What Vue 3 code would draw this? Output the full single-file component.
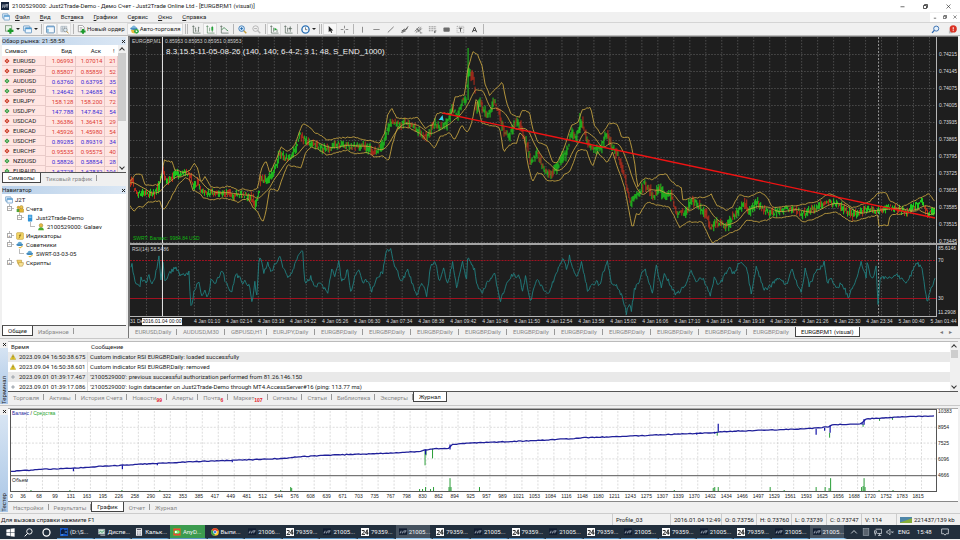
<script setup>
import { h } from 'vue'

const s = (stroke, width = 1, fill = 'none') => ({ stroke, 'stroke-width': width, fill })

// Small icon set, every glyph drawn on a 10 x 10 grid.
const glyphs = {
  app: [['rect', { width: 10, height: 10, fill: '#14233a' }], ['path', { d: 'M2.5 3v3.5h-1M5 3v3.5H4M6 3.5h3M7.5 3.5v3.5', ...s('#e8eef5', 1) }]],
  windows: [['rect', { x: 0.5, y: 1, width: 7, height: 5.5, rx: 0.6, fill: '#d9ecfb', stroke: '#5b8fbd', 'stroke-width': 0.8 }], ['rect', { x: 2.5, y: 3, width: 7, height: 5.8, rx: 0.6, fill: '#eef7ff', stroke: '#4a84b8', 'stroke-width': 0.8 }], ['path', { d: 'M2.6 4h6.8', ...s('#4a9ad4', 1.4) }]],
  addChart: [['rect', { x: 0.5, y: 0.8, width: 7, height: 6, fill: '#eaf3ea', stroke: '#6a8a6a', 'stroke-width': 0.8 }], ['path', { d: 'M6 3.6v6M3 6.6h6.4', ...s('#1d9a2b', 2.4) }]],
  marketWatch: [['rect', { x: 0.7, y: 1.2, width: 8.6, height: 7.6, rx: 0.8, fill: '#f4f9fd', stroke: '#4779a8', 'stroke-width': 0.9 }], ['path', { d: 'M1 2h8', ...s('#5c97cc', 1) }], ['path', { d: 'M2.2 4.4v3.4', ...s('#39c', 1) }]],
  dataWindow: [['path', { d: 'M1 1.5h6.5v6H1zM1 3.5h6.5M1 5.5h6M3 1.5v6M5 1.5v6', ...s('#8d9fae', 0.6) }], ['circle', { cx: 6, cy: 5.5, r: 2, fill: '#dcedf6', stroke: '#777', 'stroke-width': 0.6 }], ['path', { d: 'M7.4 7l2 2.3', ...s('#b58b34', 1.1) }]],
  newOrder: [['path', { d: 'M1.5 .5h4.5l2 2v5h-6.5z', fill: '#fff', stroke: '#777', 'stroke-width': 0.7 }], ['path', { d: 'M3 3h3M3 4.5h3', ...s('#777', 0.6) }], ['path', { d: 'M6.7 4.5v5.2M4 7.1h5.5', ...s('#1d9a2b', 2.2) }]],
  expert: [['path', { d: 'M1.5 6.5c2 2 5 1.2 6-1l1 1.5-3.5 2.5z', fill: '#e7b734' }], ['ellipse', { cx: 4.6, cy: 4.6, rx: 4.2, ry: 1.6, fill: '#3f86b8' }], ['path', { d: 'M2 4c0-4 5.5-4 5.5 0z', fill: '#63a8d2' }]],
  autoTrade: [['path', { d: 'M1 5.5l4-1 3 2-3 3-3-1z', fill: '#e8bd3c' }], ['ellipse', { cx: 4.3, cy: 4, rx: 4, ry: 1.5, fill: '#3f86b8' }], ['path', { d: 'M1.8 3.5c0-4 5-4 5 0z', fill: '#7bb5da' }], ['circle', { cx: 7.2, cy: 7, r: 2.6, fill: '#27a43a' }], ['path', { d: 'M6.4 5.6l2.2 1.4-2.2 1.4z', fill: '#fff' }]],
  bars: [['path', { d: 'M1.5 1v8h8M.5 2.2l1-1.4 1 1.4M4 3v4.5M3 3.5h1M4 6.5h1M7.2 2v5.5M6.2 6.8h1M7.2 3h1', ...s('#5b6b60', 0.8) }]],
  candles: [['path', { d: 'M1.5 1v8h8M.5 2.2l1-1.4 1 1.4M4 3v4M7 1v7', ...s('#4c7c55', 0.7) }], ['path', { d: 'M7 2.2v4', ...s('#25a53a', 2) }]],
  line: [['path', { d: 'M1.5 1v8h8M.5 2.2l1-1.4 1 1.4', ...s('#5b6b60', 0.8) }], ['path', { d: 'M2 5.5C4 2 5.5 3 6.5 4.8L9 6.6', ...s('#39874a', 0.9) }]],
  zoomIn: [['path', { d: 'M6.2 6.2l3 3', ...s('#c4a044', 1.6) }], ['circle', { cx: 4, cy: 4, r: 3.1, fill: '#d9ecfa', stroke: '#3a78b5', 'stroke-width': 1 }], ['path', { d: 'M4 2.4v3.2M2.4 4h3.2', ...s('#2068ac', 1) }]],
  zoomOut: [['path', { d: 'M6.2 6.2l3 3', ...s('#bbb', 1.5) }], ['circle', { cx: 4, cy: 4, r: 3.1, fill: '#f1f1f1', stroke: '#aaa', 'stroke-width': 0.9 }], ['path', { d: 'M2.4 4h3.2', ...s('#aaa', 1) }]],
  scroll: [['path', { d: 'M1.5 1v8h8M.5 2.2l1-1.4 1 1.4M4 3v4.5M7.8 5v3', ...s('#5b6b60', 0.8) }], ['path', { d: 'M5 3l3 1.8L5 6.5z', fill: '#2aa33b' }]],
  shift: [['path', { d: 'M1.5 1v8h8M.5 2.2l1-1.4 1 1.4M4 3v4.5M7 1.5v6M5 4h4', ...s('#5b6b60', 0.8) }], ['path', { d: 'M5 4l2-1.4v2.8z', fill: '#5b6b60' }]],
  clock: [['circle', { cx: 5, cy: 5, r: 4, fill: '#f4faff', stroke: '#2b70b4', 'stroke-width': 1.5 }], ['path', { d: 'M5 2.6v2.6h2', ...s('#555', 0.8) }]],
  cursor: [['path', { d: 'M3 1v7l1.6-1.5L5.8 9l1.1-.6-1.1-2.3H8z', fill: '#222' }]],
  cross: [['path', { d: 'M5 .8v3M5 6.2v3M.8 5h3M6.2 5h3', ...s('#777', 0.9) }]],
  vline: [['path', { d: 'M5 2v6.5', ...s('#777', 0.9) }]],
  hline: [['path', { d: 'M1.5 5h7', ...s('#777', 0.9) }]],
  trend: [['path', { d: 'M2 8.3L8.5 2', ...s('#666', 0.9) }]],
  channel: [['path', { d: 'M1.5 8.5l3-4 2 .5 2.5-3.5M2.5 8.8l6-5.5M2 6l4 1', ...s('#555', 1) }]],
  pitch: [['path', { d: 'M1 7l5-5M2 8.5L8 2.6M3 4l3 3M4.5 8l4-4', ...s('#555', 0.9) }], ['path', { d: 'M7 8.8h2.2M7 7.2v2.2', ...s('#777', 0.8) }]],
  fibo: [['path', { d: 'M1 2h8M1 4.2h8M1 6.4h5', 'stroke-dasharray': '1.2 .6', ...s('#666', 0.8) }], ['path', { d: 'M7.3 9V6.5h2M7.3 7.8h1.6', ...s('#555', 0.8) }]],
  rect: [['rect', { x: 1.6, y: 2.8, width: 7, height: 4.6, rx: 1, fill: '#6b6b6b' }]],
  textBox: [['rect', { x: 1.2, y: 1.5, width: 7.4, height: 7, 'stroke-dasharray': '1 1', ...s('#888', 0.7) }], ['path', { d: 'M3 3.5h4M5 3.5v4', ...s('#444', 1) }]],
  label: [['path', { d: 'M2.6 8L5 2.4 7.4 8M3.4 6.2h3.2', ...s('#444', 1.1) }]],
  search: [['circle', { cx: 5.8, cy: 4, r: 2.8, fill: '#e6f1fb', stroke: '#2c66ab', 'stroke-width': 1 }], ['path', { d: 'M3.7 6L1.2 8.8', ...s('#2c66ab', 1.5) }]],
  alert: [['path', { d: 'M1 9.5V6h4v3.2z', fill: '#bbb' }], ['circle', { cx: 5.8, cy: 4.4, r: 4, fill: '#da3325' }], ['path', { d: 'M5.8 2.4v2.6M5.8 5.8v1', ...s('#fff', 1.1) }]],
  up: [['path', { d: 'M5 .8L9.2 5 5 9.2.8 5z', fill: '#2b9638' }], ['path', { d: 'M5 3.4L6.6 5 5 6.6 3.4 5z', fill: '#bfe8c4' }]],
  down: [['path', { d: 'M5 .8L9.2 5 5 9.2.8 5z', fill: '#c5341f' }], ['path', { d: 'M5 3.4L6.6 5 5 6.6 3.4 5z', fill: '#ffc9bd' }]],
  accounts: [['path', { d: 'M.8 8.8V5h4.5v3.8z', fill: '#4ea53a' }], ['circle', { cx: 3, cy: 3, r: 2, fill: '#d4a73a' }], ['path', { d: 'M4 9V5.2c1-1.5 4.5-1.5 5.4 0V9z', fill: '#e3b62e', stroke: '#94721a', 'stroke-width': 0.5 }], ['circle', { cx: 6.7, cy: 2.7, r: 2.1, fill: '#e9c250', stroke: '#94721a', 'stroke-width': 0.5 }]],
  server: [['rect', { x: 2.4, y: 0.8, width: 5.4, height: 8.6, rx: 0.6, fill: '#2e93d8' }], ['path', { d: 'M3.4 2.6h3.4M3.4 4.3h3.4', ...s('#bfe3f9', 0.8) }]],
  user: [['circle', { cx: 5, cy: 3, r: 2.3, fill: '#e3bb45', stroke: '#8c7223', 'stroke-width': 0.5 }], ['path', { d: 'M1.4 9.2c0-5 7.2-5 7.2 0z', fill: '#4aaa2e' }]],
  indicator: [['rect', { x: 0.8, y: 0.8, width: 8.4, height: 8.4, rx: 1, fill: '#f5d868', stroke: '#b99122', 'stroke-width': 0.7 }], ['path', { d: 'M6.6 2.6C5 2 5 4 4.8 5s-.2 3-1.6 2.6M3.6 4.6h2.8', ...s('#7a5a10', 0.8) }]],
  scripts: [['path', { d: 'M1 1.5h6v5H2.5z', fill: '#f1cf5f', stroke: '#a98322', 'stroke-width': 0.6 }], ['path', { d: 'M3 4.5h6.2v2L8 9H4z', fill: '#f6e29a', stroke: '#a98322', 'stroke-width': 0.6 }]],
  warn: [['path', { d: 'M5 .8L9.6 9H.4z', fill: '#f3d526', stroke: '#8f7a10', 'stroke-width': 0.6 }], ['path', { d: 'M5 3.2v3M5 7v1', ...s('#333', 1) }]],
  dot: [['circle', { cx: 5, cy: 5, r: 2.1, fill: '#c9ced4', stroke: '#7e868e', 'stroke-width': 0.9 }]],
  close: [['path', { d: 'M2 2l6 6M8 2L2 8', ...s('#111', 1.8) }]],
  closeThin: [['path', { d: 'M1 1l8 8M9 1L1 9', ...s('#222', 1.2) }]],
  minimize: [['path', { d: 'M1 5.5h8', ...s('#222', 1.3) }]],
  restore: [['path', { d: 'M1 3h6v6H1zM3 3V1h6v6H7', ...s('#222', 1.5) }]],
  low: [['path', { d: 'M2 8h6', ...s('#444', 1.8) }]],
  winLogo: [['path', { d: 'M.4 1.6l4-.6v3.7h-4zM5 .9L9.6.2v4.5H5zM.4 5.3h4V9l-4-.6zM5 5.3h4.6v4.5L5 9.1z', fill: '#fff' }]],
  searchLight: [['circle', { cx: 6, cy: 3.8, r: 3, ...s('#fff', 1) }], ['path', { d: 'M4 6L.8 9.3', ...s('#fff', 1.1) }]],
  cortana: [['circle', { cx: 5, cy: 5, r: 3.9, ...s('#fff', 1.4) }]],
  disk: [['rect', { width: 10, height: 10, fill: '#1557c8' }], ['path', { d: 'M1 3l3-2 2 2 3-1v6l-4-1-4 2z', fill: '#0b1d3f' }], ['path', { d: 'M1 8.5h3M6 5h3', ...s('#7fc4ff', 1) }]],
  taskman: [['rect', { x: 0.5, y: 1.5, width: 8, height: 6, fill: '#cfe8d8', stroke: '#aab', 'stroke-width': 0.8 }], ['path', { d: 'M1 6l2-2 2 1.5L8 3', ...s('#2b8b55', 1) }], ['path', { d: 'M3 9h6', ...s('#ddd', 1) }]],
  calc: [['rect', { x: 1.2, y: 0.3, width: 7.6, height: 9.4, fill: '#eef0f2' }], ['path', { d: 'M2.4 2h5.2', ...s('#445', 1.2) }], ['path', { d: 'M2.6 4.8h5M2.6 6.5h5M2.6 8.2h5', 'stroke-dasharray': '1 1', ...s('#667', 1) }]],
  anydesk: [['rect', { width: 10, height: 10, rx: 0.8, fill: '#ef443b' }], ['path', { d: 'M3.6 2.6L6 5 3.6 7.4 1.2 5zM5.4 2.8L7.8 5 5.4 7.2M6.4 2.6L8.8 5 6.4 7.4', fill: '#fff' }]],
  chrome: [['circle', { cx: 5, cy: 5, r: 4.8, fill: '#fbc02d' }], ['path', { d: 'M5 5L.9 2.5A4.8 4.8 0 0 1 9.3 3z', fill: '#e33b2e' }], ['path', { d: 'M5 5L.9 2.5A4.8 4.8 0 0 0 4.5 9.8z', fill: '#2e9f4a' }], ['circle', { cx: 5, cy: 5, r: 2.3, fill: '#fff' }], ['circle', { cx: 5, cy: 5, r: 1.7, fill: '#3f7fe8' }]],
  mt: [['rect', { y: 0.5, width: 10, height: 8, fill: '#101c30' }], ['path', { d: 'M2.6 3.4L2 6.2H.8M5.4 3.4L4.8 6.2H3.6M6.4 3.6h3M7.8 3.6l-.6 3', ...s('#c6d0dc', 0.9) }]],
  n24: [['rect', { width: 10, height: 10, fill: '#fff' }], ['path', { d: 'M1 3.2h3v2L1.2 8H5M7.8 8.4V2.2L5.6 6.4H9.4', ...s('#111', 1.1) }]],
  chevron: [['path', { d: 'M1.5 6.8L5 3.2l3.5 3.6', ...s('#e8ecf0', 1) }]],
  device: [['rect', { x: 1.5, y: 0.8, width: 7, height: 8.4, fill: '#59636e', stroke: '#98a2ab', 'stroke-width': 0.8 }]],
  network: [['path', { d: 'M2 1.5h7.5v5.3H4M5 9.3h4M6.8 7v2M.5 3.5v3h2.4v-3zM1.6 6.5v3', ...s('#e8ecf0', 0.9) }]],
  mute: [['path', { d: 'M1 3.8h1.6L5 1.5v7L2.6 6.2H1z', ...s('#e8ecf0', 0.8) }], ['path', { d: 'M6.8 4l2.4 2.4M9.2 4L6.8 6.4', ...s('#e8ecf0', 0.8) }]],
  notify: [['path', { d: 'M.8 1.2h8.4v6H6.4L5 9 3.6 7.2H.8z', ...s('#e8ecf0', 0.9) }]],
  traffic: [['rect', { width: 10, height: 10, fill: '#4f86a8' }], ['path', { d: 'M0 9L10 2v8H0z', fill: '#86ad3a' }]],
}
const Glyph = (props) => h('svg', { viewBox: '0 0 10 10', class: 'glyph', 'aria-hidden': 'true', preserveAspectRatio: props.fill ? 'none' : 'xMidYMid' },
  glyphs[props.name].map(([tag, attrs]) => h(tag, attrs)))
Glyph.props = ['name', 'fill']

const menu = [['Ф', 'айл', ''], ['В', 'ид', ''], ['а', 'вка', 'Вст'], ['Г', 'рафики', ''], ['е', 'рвис', 'С'], ['О', 'кно', ''], ['С', 'правка', '']]

const symbols = [
  ['EURUSD', '1.06993', '1.07014', 21, 0], ['EURGBP', '0.85807', '0.85859', 52, 0], ['AUDUSD', '0.63760', '0.63795', 35, 1],
  ['GBPUSD', '1.24642', '1.24685', 43, 1], ['EURJPY', '158.128', '158.200', 72, 0], ['USDJPY', '147.788', '147.842', 54, 1],
  ['USDCAD', '1.36386', '1.36415', 29, 0], ['EURCAD', '1.45926', '1.45980', 54, 0], ['USDCHF', '0.89285', '0.89319', 34, 1],
  ['EURCHF', '0.95535', '0.95575', 40, 0], ['NZDUSD', '0.58826', '0.58854', 28, 1], ['EURAUD', '1.67728', '1.67832', 104, 1],
]

const tree = [
  [0, 'windows', 'J2T', ''], [1, 'accounts', 'Счета', '−'], [2, 'server', 'Just2Trade-Demo', '−'], [3, 'user', '2100529000: Galaev', ''],
  [1, 'indicator', 'Индикаторы', '+'], [1, 'expert', 'Советники', '−'], [2, 'expert', 'SWRT-03-03-05', ''], [1, 'scripts', 'Скрипты', '+'],
]

const prices = ['0.74215', '0.74145', '0.74075', '0.74005', '0.73935', '0.73865', '0.73795', '0.73725', '0.73655', '0.73585', '0.73515', '0.73445']
const times = ['31 De', '', '4 Jan 01:10', '4 Jan 02:14', '4 Jan 03:18', '4 Jan 04:22', '4 Jan 05:26', '4 Jan 06:30', '4 Jan 07:34', '4 Jan 08:38', '4 Jan 09:42', '4 Jan 10:46', '4 Jan 11:50', '4 Jan 12:54', '4 Jan 13:58', '4 Jan 15:02', '4 Jan 16:06', '4 Jan 17:10', '4 Jan 18:14', '4 Jan 19:18', '4 Jan 20:22', '4 Jan 21:26', '4 Jan 22:30', '4 Jan 23:34', '5 Jan 00:40', '5 Jan 01:44']
const chartTabs = ['EURUSD,Daily', 'AUDUSD,M30', 'GBPUSD,H1', 'EURJPY,Daily', ...Array(10).fill('EURGBP,Daily')]

const parse = (text) => text.trim().split(/\s+/).map((p) => p.split(',').map(Number))
const price = parse(`130,183 132,179 134,186 136,192 140,193 145,191 148,195 155,193 159,185 161,180 163,167 166,182 170,180 175,175 180,173 188,173 191,178 194,188 198,183 201,191 206,193 213,193 225,192 233,196 241,194 251,197 256,207 260,187 261,178 268,182 275,170 280,153 285,158 291,158 296,148 300,135 305,140 311,143 318,146 325,149 330,148 340,144 353,147 363,145 375,153 383,145 388,130 392,122 400,125 408,122 417,130 427,138 435,124 442,127 448,122 453,107 458,117 463,100 467,103 468,72 470,74 475,80 477,112 480,101 485,111 488,118 495,99 500,115 505,132 510,136 517,121 522,127 527,143 532,163 538,153 545,170 552,175 560,163 567,153 572,133 577,138 583,121 587,138 592,150 602,148 607,133 613,147 618,153 623,167 627,183 632,206 635,195 639,193 642,191 645,183 650,190 655,197 660,187 665,197 672,195 678,213 687,212 693,200 702,208 708,215 712,229 718,222 727,227 737,213 745,203 750,212 758,202 765,210 773,213 783,210 797,209 803,215 813,210 827,202 840,205 853,215 867,210 880,210 890,207 907,212 923,202 930,214 937,209`)
const upper = parse(`130,182 135,174 142,175 145,185 159,185 161,180 164,160 172,162 175,170 186,173 190,170 194,163 198,168 201,183 205,177 211,187 221,188 228,186 238,190 245,189 251,191 258,188 261,170 266,161 270,173 275,163 281,147 288,152 295,145 303,123 310,127 315,133 321,135 327,140 340,138 353,137 367,140 380,143 385,133 388,115 392,108 397,118 408,119 418,117 425,128 433,125 437,113 445,113 452,115 455,97 465,95 468,70 473,52 478,55 483,67 485,83 490,95 497,88 503,82 507,103 512,115 520,117 523,110 530,112 533,128 538,142 547,145 553,162 558,163 565,147 572,125 578,123 583,110 591,107 595,125 602,135 610,123 618,124 622,137 630,138 635,160 638,187 642,181 647,178 653,180 660,175 667,174 671,180 677,185 682,188 683,200 692,198 707,197 712,194 717,205 727,210 733,207 740,195 750,197 760,192 768,197 773,207 783,207 800,205 817,202 830,193 840,198 853,208 870,202 879,193 888,193 890,200 903,207 913,202 923,197 930,194 937,203`)
const lower = parse(`130,206 134,211 138,207 143,207 148,202 160,201 162,208 164,210 170,200 178,185 185,178 190,180 193,190 200,193 203,198 211,200 225,198 238,202 248,198 253,207 258,212 263,223 266,213 270,188 278,191 285,172 288,165 301,168 306,152 311,147 320,150 327,155 340,152 347,150 355,154 367,152 375,157 383,156 389,161 393,143 398,127 410,128 420,133 425,138 435,148 440,137 450,133 455,140 462,125 468,133 473,120 477,97 482,123 488,125 500,127 504,152 510,145 517,143 520,133 525,137 528,163 533,182 538,173 543,174 548,181 560,181 565,174 570,172 575,160 578,150 587,150 593,167 598,152 608,163 613,152 618,167 625,187 633,229 637,214 640,214 648,202 657,205 670,207 677,220 680,228 688,222 703,222 708,233 713,243 722,238 730,233 740,230 747,220 760,222 768,220 773,217 783,218 797,215 803,222 813,220 827,213 837,212 845,217 852,222 870,217 879,215 880,226 889,225 891,215 907,213 920,210 930,215 937,213`)
const rsi = parse(`131,267 132,264 135,283 140,288 141,279 146,283 149,275 152,285 155,277 159,257 161,280 163,263 165,280 170,273 176,267 180,274 185,275 189,273 191,307 194,293 199,280 202,297 205,292 208,297 211,280 216,283 222,270 226,283 232,292 236,273 243,283 246,282 250,288 252,302 255,283 257,297 259,262 261,258 264,273 268,264 272,272 280,255 283,268 289,278 295,265 300,252 303,253 305,283 311,277 315,287 320,282 328,293 332,268 335,278 339,262 342,283 348,270 351,293 355,277 360,270 363,283 366,278 372,290 378,277 383,272 387,250 391,249 395,265 402,282 408,270 417,295 422,283 427,295 431,267 436,262 440,282 444,268 448,285 453,262 457,287 463,263 467,280 468,257 475,270 478,287 483,292 487,283 495,273 501,302 507,282 513,275 520,277 523,290 526,277 531,302 537,280 543,288 550,293 555,277 564,258 567,270 570,257 577,277 582,263 588,290 597,282 600,285 608,260 612,283 618,287 623,297 627,313 630,303 632,310 635,290 640,280 645,268 648,277 653,293 657,267 662,287 665,273 670,283 675,293 680,293 687,283 692,270 697,282 703,278 711,295 715,278 720,285 730,267 735,275 740,263 747,265 752,293 757,267 765,290 773,285 778,277 787,285 793,270 802,293 806,270 810,285 817,272 825,263 828,283 832,277 837,288 843,283 849,297 855,285 862,263 867,277 868,263 873,280 877,267 879,303 881,278 890,277 897,275 908,283 917,263 923,267 928,303 932,288 937,277`)
const balance = parse(`11,472 30,471 43,470 73,469 100,467 122,466 157,464 200,462 233,461 287,459 293,458 320,456 353,455 380,454 420,452 428,450 437,449 450,449 452,445 478,443 537,441 587,438 640,436 715,433 720,432 807,429 830,427 832,425 862,424 867,419 900,417 937,416`)

const valueAt = (points, x) => {
  const i = Math.max(1, points.findIndex((p) => p[0] >= x))
  const [a, b] = [points[i - 1], points[i]]
  return a[1] + ((b[1] - a[1]) * (x - a[0])) / (b[0] - a[0] || 1)
}
const noise = (n) => { const v = Math.sin(n * 127.1 + 11.7) * 43758.5453; return (v - Math.floor(v)) * 2 - 1 }
const round = (v) => Math.round(v * 10) / 10
const toLine = (points) => points.map(([x, y]) => `${round(x)},${round(y)}`).join(' ')
const sample = (points, from, to, step, jitter) => {
  const out = []
  for (let x = from; x <= to; x += step) out.push([x, valueAt(points, x) + noise(x) * jitter])
  return out
}

const middle = sample(price, 130, 936, 2, 0).map(([x]) => {
  let sum = 0
  for (let k = 0; k < 12; k++) sum += valueAt(price, Math.max(130, x - k * 1.4))
  return [x, sum / 12]
})
const candlePath = (wanted) => {
  let d = ''
  for (let i = 0, x = 130.5; x < 936; x += 1, i++) {
    const slope = valueAt(price, Math.min(936, x + 2)) - valueAt(price, x)
    const rising = noise(i + 40) * 2.4 - slope * 0.3 > -0.7
    if (rising !== wanted) continue
    const mid = valueAt(price, x) + noise(i) * 2.4
    const size = 1 + Math.abs(noise(i + 900)) * (2.4 + Math.min(3, Math.abs(slope)))
    d += `M${round(x)} ${round(mid - size)}V${round(mid + size)}`
  }
  return d
}
const upCandles = candlePath(true)
const downCandles = candlePath(false)
const upperLine = toLine(sample(upper, 130, 936, 1.5, 0.6))
const lowerLine = toLine(sample(lower, 130, 936, 1.5, 0.6))
const middleLine = toLine(middle)
const rsiLine = toLine(sample(rsi, 131, 936, 1, 2.2))
const balanceLine = toLine(sample(balance, 11, 936, 2, 0.35))

const columns = Array.from({ length: 50 }, (_, i) => 146.5 + i * 16)
const rows = Array.from({ length: 12 }, (_, i) => Math.round(54 + i * 17.1) + 0.5)
const testerColumns = Array.from({ length: 57 }, (_, i) => 26.5 + i * 16)
const steps = [36, 68, 99, 131, 163, 195, 226, 258, 290, 322, 353, 385, 417, 449, 481, 512, 544, 576, 608, 639, 671, 703, 735, 767, 798, 830, 862, 894, 925, 957, 989, 1021, 1053, 1084, 1116, 1148, 1180, 1211, 1243, 1275, 1307, 1339, 1370, 1402, 1434, 1466, 1497, 1529, 1561, 1593, 1625, 1656, 1688, 1720, 1752, 1783, 1815]
const volumes = [[291, 4], [292, 3], [420, 2], [423, 2], [426, 4], [431, 2], [434, 4], [449.5, 4], [450.5, 13], [451.5, 4], [480, 4], [714, 3], [715.5, 4], [719, 4], [771, 4], [817, 4], [826, 4], [830, 3], [831.5, 13], [862.5, 4], [864, 5], [865, 13], [866, 4], [31, 1], [70, 1], [122, 1], [160, 1], [281, 1], [675, 1], [785, 1], [880, 1], [894, 1]]

const log = [
  ['warn', '2023.09.04 16:50:38.675', 'Custom indicator RSI EURGBP,Daily: loaded successfully'],
  ['warn', '2023.09.04 16:50:38.601', 'Custom indicator RSI EURGBP,Daily: removed'],
  ['dot', '2023.09.01 01:39:17.467', "'2100529000': previous successful authorization performed from 81.26.146.150"],
  ['dot', '2023.09.01 01:39:17.086', "'2100529000': login datacenter on Just2Trade-Demo through MT4.AccessServer#16 (ping: 113.77 ms)"],
]
const terminalTabs = [['Торговля'], ['Активы'], ['История Счета'], ['Новости', 99], ['Алерты'], ['Почта', 6], ['Маркет', 107], ['Сигналы'], ['Статьи'], ['Библиотека'], ['Эксперты'], ['Журнал']]
const testerTabs = ['Настройки', 'Результаты', 'График', 'Отчет', 'Журнал']

const tasks = [
  ['disk', '(D:\\S...'], ['taskman', 'Диспе...'], ['calc', 'Кальк...'], ['anydesk', 'AnyD...', 'green'], ['chrome', 'Выпи...'],
  ['mt', '21006...'], ['n24', '79359...'], ['mt', '21005...'], ['n24', '79359...'], ['mt', '21005...', 'lit'], ['n24', '79359...'],
  ['mt', '21005...'], ['n24', '79359...'], ['mt', '21005...'], ['n24', '79359...'], ['mt', '21005...'], ['n24', '79359...'],
  ['mt', '21005...'], ['n24', '79359...'], ['mt', '21005...'], ['mt', '21005...', 'lit'],
]
</script>

<template>
  <div class="desk">
    <header class="title">
      <Glyph name="app" />
      <span class="grow">2100529000: Just2Trade-Demo - Демо Счет - Just2Trade Online Ltd - [EURGBP,M1 (visual)]</span>
      <button aria-label="Свернуть"><Glyph name="minimize" /></button>
      <button aria-label="Восстановить"><Glyph name="restore" /></button>
      <button aria-label="Закрыть"><Glyph name="closeThin" /></button>
    </header>

    <nav class="menu">
      <Glyph name="windows" />
      <button v-for="m in menu" :key="m[0] + m[1]">{{ m[2] }}<u>{{ m[0] }}</u>{{ m[1] }}</button>
      <span class="grow"></span>
      <button class="mini" aria-label="Свернуть окно"><Glyph name="low" /></button>
      <button class="mini" aria-label="Восстановить окно"><Glyph name="restore" /></button>
      <button class="mini" aria-label="Закрыть окно"><Glyph name="closeThin" /></button>
    </nav>

    <div class="toolbar">
      <button class="drop" aria-label="Новый график"><Glyph name="addChart" /></button>
      <button class="drop" aria-label="Профили"><Glyph name="windows" /></button>
      <i class="sep"></i>
      <button class="on" aria-label="Обзор рынка"><Glyph name="marketWatch" /></button>
      <button class="on" aria-label="Окно данных"><Glyph name="dataWindow" /></button>
      <i class="sep"></i>
      <button class="wide"><Glyph name="newOrder" />Новый ордер</button>
      <button class="wide on"><Glyph name="autoTrade" />Авто-торговля</button>
      <i class="sep handle"></i>
      <button aria-label="Бары"><Glyph name="bars" /></button>
      <button class="on" aria-label="Свечи"><Glyph name="candles" /></button>
      <button aria-label="Линия"><Glyph name="line" /></button>
      <i class="sep"></i>
      <button aria-label="Увеличить"><Glyph name="zoomIn" /></button>
      <button aria-label="Уменьшить"><Glyph name="zoomOut" /></button>
      <i class="sep"></i>
      <button class="on" aria-label="Автопрокрутка"><Glyph name="scroll" /></button>
      <button aria-label="Сдвиг графика"><Glyph name="shift" /></button>
      <i class="sep"></i>
      <button class="drop" aria-label="Периоды"><Glyph name="clock" /></button>
      <i class="sep handle"></i>
      <button class="on" aria-label="Курсор"><Glyph name="cursor" /></button>
      <button aria-label="Перекрестие"><Glyph name="cross" /></button>
      <i class="sep"></i>
      <button v-for="t in ['vline', 'hline', 'trend', 'channel', 'pitch', 'fibo', 'rect', 'textBox', 'label']" :key="t" :aria-label="t"><Glyph :name="t" /></button>
      <i class="sep"></i>
      <span class="grow"></span>
      <button aria-label="Поиск"><Glyph name="search" /></button>
      <button class="notice" aria-label="Уведомления"><Glyph name="alert" /></button>
    </div>

    <main class="work">
      <aside class="side">
        <section>
          <h2 class="cap">Обзор рынка: 21:58:58<button aria-label="Закрыть обзор"><Glyph name="close" /></button></h2>
          <div class="market">
            <table>
              <thead><tr><th>Символ</th><th>Бид</th><th>Аск</th><th>!</th></tr></thead>
              <tbody>
                <tr v-for="r in symbols" :key="r[0]" :class="r[4] ? 'rise' : 'fall'">
                  <td><Glyph :name="r[4] ? 'up' : 'down'" />{{ r[0] }}</td><td>{{ r[1] }}</td><td>{{ r[2] }}</td><td>{{ r[3] }}</td>
                </tr>
              </tbody>
            </table>
            <div class="scroll market-scroll"><b></b></div>
          </div>
          <div class="tabs"><button class="active">Символы</button><button>Тиковый график</button></div>
        </section>
        <section class="nav">
          <h2 class="cap">Навигатор<button aria-label="Закрыть навигатор"><Glyph name="close" /></button></h2>
          <ul>
            <li v-for="n in tree" :key="n[2]" :class="'level' + n[0]">
              <i v-if="n[0]" class="twig"><b v-if="n[3]">{{ n[3] }}</b></i><Glyph :name="n[1]" />{{ n[2] }}
            </li>
          </ul>
          <div class="tabs"><button class="active">Общие</button><button>Избранное</button></div>
        </section>
      </aside>

      <section class="charts">
        <div class="dark">
          <div class="pane price">
            <svg viewBox="130 37 807 206" preserveAspectRatio="none">
              <g class="grid">
                <path v-for="x in columns" :key="x" :d="`M${x} 37V243`" />
                <path v-for="y in rows" :key="y" :d="`M130 ${y}H937`" />
              </g>
              <path class="day" d="M879.5 37V243" />
              <path class="green" :d="upCandles" />
              <path class="red" :d="downCandles" />
              <path class="green" d="M468.5 48V100M580.5 113V130" />
              <polyline class="band" :points="upperLine" />
              <polyline class="band" :points="lowerLine" />
              <polyline class="band" :points="middleLine" />
              <path class="order" d="M443 113L936 218" />
              <path d="M439 120l4-5 1 6-2-1z" fill="#35d3ea" />
              <path class="cursor-line" d="M162.5 37V243" />
            </svg>
            <span class="quote">EURGBP,M1&nbsp;&nbsp; 0.85953 0.85953 0.85951 0.85953</span>
            <span class="params">8.3,15.5-11-05-08-26 (140, 140; 6-4-2; 3 1; 48, S_END_1000)</span>
            <span class="balance">SWRT: Баланс: 9984.84 USD</span>
          </div>
          <div class="axis main-axis"><span v-for="p in prices" :key="p">{{ p }}</span></div>

          <div class="pane rsi">
            <svg viewBox="130 245 807 71" preserveAspectRatio="none">
              <g class="grid"><path v-for="x in columns" :key="x" :d="`M${x} 245V316`" /></g>
              <path class="day" d="M879.5 245V316" />
              <path class="level high" d="M130 260.5H937" />
              <path class="level" d="M130 298.5H937" />
              <polyline class="rsi-line" :points="rsiLine" />
              <path class="cursor-line" d="M162.5 245V316" />
            </svg>
            <span class="quote">RSI(14) 58.5486</span>
          </div>
          <div class="axis rsi-axis"><span>85.6146</span><span>70</span><span>30</span><span>11.2908</span></div>

          <div class="times">
            <span v-for="t in times" :key="t">{{ t }}</span>
            <b class="stamp">2016.01.04 00:00</b>
          </div>
        </div>
        <div class="chart-tabs">
          <button v-for="(t, i) in chartTabs" :key="i" :class="{ short: i === 2 }">{{ t }}</button>
          <button class="active">EURGBP,M1 (visual)</button>
          <span class="grow"></span><i class="arrows">◂</i><i class="arrows">▸</i>
        </div>
      </section>
    </main>

    <section class="dock">
      <div class="spine"><button aria-label="Закрыть терминал"><Glyph name="close" /></button><span>Терминал</span></div>
      <div class="dock-body">
        <div class="log">
          <table>
            <thead><tr><th>Время</th><th>Сообщение</th></tr></thead>
            <tbody><tr v-for="l in log" :key="l[1]"><td><Glyph :name="l[0]" />{{ l[1] }}</td><td>{{ l[2] }}</td></tr></tbody>
          </table>
          <div class="scroll log-scroll"><b></b></div>
        </div>
        <div class="tabs dock-tabs">
          <button v-for="t in terminalTabs" :key="t[0]" :class="{ active: t[0] === 'Журнал' }">{{ t[0] }}<sub v-if="t[1]">{{ t[1] }}</sub></button>
        </div>
      </div>
    </section>

    <section class="dock tester">
      <div class="spine"><button aria-label="Закрыть тестер"><Glyph name="close" /></button><span>Тестер</span></div>
      <div class="dock-body">
        <div class="graph">
          <div class="plot">
            <svg viewBox="11 410 926 82" preserveAspectRatio="none">
              <g class="pale">
                <path v-for="x in testerColumns" :key="x" :d="`M${x} 411V492`" />
                <path d="M11 427.5H937M11 443.5H937M11 459.5H937" />
              </g>
              <path class="equity" d="M425.5 451V466M426.5 451V456M433 449V459M718 432V436M830.5 433V438M864 424V427M880.5 419V421M893.5 417V420" />
              <polyline class="balance-line" :points="balanceLine" />
              <path class="spikes" d="M73.5 469V472M122.5 466V470M157.5 464V466M232.5 461V463M426 450V455M450.5 445V450M697.5 433V435M715.5 432V434M719 424V432M817 429V435M825.5 428V431M831 426V433M863 423V425M865 419V425" />
              <path v-for="v in volumes" :key="v[0]" class="volume" :d="`M${v[0]} 492V${492 - v[1]}`" />
              <path class="rule" d="M11 476.5H937" />
            </svg>
            <span class="legend"><b>Баланс</b> / <i>Средства</i></span>
            <span class="legend volume-name">Объем</span>
          </div>
          <div class="money"><span>10383</span><span>8954</span><span>7525</span><span>6096</span><span>4666</span></div>
          <div class="steps"><b>0</b><span v-for="n in steps" :key="n">{{ n }}</span></div>
        </div>
        <div class="tabs dock-tabs">
          <button v-for="t in testerTabs" :key="t" :class="{ active: t === 'График' }">{{ t }}</button>
        </div>
      </div>
    </section>

    <div class="status">
      <span class="grow">Для вызова справки нажмите F1</span>
      <span class="profile">Profile_03</span><span class="date">2016.01.04 12:49</span>
      <span>O: 0.73756</span><span>H: 0.73760</span><span>L: 0.73739</span><span>C: 0.73747</span><span>V: 114</span>
      <span class="traffic"><Glyph name="traffic" fill="1" />221437/139 kb</span>
    </div>

    <footer class="taskbar">
      <button class="sys" aria-label="Пуск"><Glyph name="winLogo" /></button>
      <button class="sys" aria-label="Поиск в системе"><Glyph name="searchLight" /></button>
      <button class="sys" aria-label="Кортана"><Glyph name="cortana" /></button>
      <div class="tasks">
        <button v-for="(t, i) in tasks" :key="i" :class="t[2]"><Glyph :name="t[0]" /><span>{{ t[1] }}</span></button>
      </div>
      <div class="tray">
        <Glyph name="chevron" /><Glyph name="device" /><Glyph name="network" /><Glyph name="mute" />
        <span>ENG</span><span class="time">15:48</span><Glyph name="notify" />
      </div>
    </footer>
  </div>
</template>

<style>
body { background: #f0f0f0; }
.glyph { width: 9px; height: 9px; flex: none; display: block; }
</style>

<style scoped>
.desk { font: 6px/10px Roboto, "Noto Sans", sans-serif; color: #222; background: #f0f0f0; display: flex; flex-direction: column; overflow: hidden; }
.desk *, .desk *::before, .desk *::after { box-sizing: border-box; }
button { font: inherit; color: inherit; background: none; border: 0; padding: 0; margin: 0; white-space: nowrap; }
.grow { flex: 1; }
i { font-style: normal; }
svg { display: block; }

.title { display: flex; align-items: center; height: 12px; background: #fff; padding: 0 2px 0 1px; gap: 3px; }
.title button { width: 20px; display: grid; place-items: center; }
.title button .glyph { width: 5px; height: 5px; }
.title > .glyph { width: 8px; height: 8px; }

.menu { display: flex; align-items: center; height: 10px; padding-left: 2px; gap: 10px; }
.menu > .glyph { width: 8px; height: 8px; margin-right: -5px; }
.mini { width: 10px; margin-left: -10px; height: 9px; background: #fff; display: grid; place-items: center; }
.mini .glyph { width: 4px; height: 4px; }

.toolbar { display: flex; align-items: center; height: 14px; border-top: 1px solid #d4d4d4; padding: 0 1px 0 3px; border-bottom: 1px solid #bbb; }
.toolbar button { width: 14px; height: 12px; display: flex; align-items: center; justify-content: center; flex: none; }
.toolbar button.on { background: #f8f8f8; border: 1px solid #dcdcdc; }
.toolbar button.drop { width: 18px; gap: 2px; }
.toolbar button.drop::after { content: ''; border: 2px solid transparent; border-top-color: #222; border-bottom: 0; }
.toolbar button.wide { width: auto; padding: 0 2px; gap: 1px; }
.toolbar button.notice { margin-left: 3px; }
.sep { width: 1px; height: 10px; background: #b4b4b4; margin: 0 1px 0 2px; flex: none; }
.handle { width: 3px; border: solid #b8b8b8; border-width: 0 1px; background: none; }

.work { display: flex; align-items: stretch; }
.side { width: 129px; flex: none; display: flex; flex-direction: column; padding: 1px 2px 0 2px; border-right: 1px solid #777; }
.cap { margin: 0; height: 8px; font: inherit; line-height: 8px; background: linear-gradient(90deg, #b9d1ea, #dbe7f4); display: flex; justify-content: space-between; align-items: center; }
.cap .glyph { width: 5px; height: 5px; }
.market { display: flex; height: 128px; overflow: hidden; background: #fff; border-bottom: 1px solid #555; }
.market table { flex: 1; border-collapse: collapse; height: min-content; table-layout: fixed; }
.market th { font-weight: 400; height: 11px; padding: 0 3px 0 0; text-align: right; }
.market th:first-child { text-align: left; width: 44px; padding-left: 3px; }
.market th:nth-child(2), .market th:nth-child(3) { width: 29px; }
.market td { height: 10px; line-height: 9px; padding: 0 1px 0 0; text-align: right; background: #ffe5e2; border: solid #e9cbc9; border-width: 0 1px 1px 0; }
.market td:first-child { display: flex; align-items: center; gap: 3px; padding-left: 2px; color: #222; }
.market td .glyph { width: 6px; height: 6px; }
.fall td { color: #dc3b33; }
.rise td { color: #3a2bd6; }
.scroll { width: 8px; background: #f0f0f0; display: flex; flex-direction: column; align-items: center; justify-content: space-between; flex: none; }
.scroll::before, .scroll::after { content: ''; width: 4px; height: 4px; border: solid #333; border-width: 1px 0 0 1px; transform: rotate(45deg); margin: 3px 0 1px; }
.scroll::after { transform: rotate(225deg); margin: auto 0 3px; }
.scroll b { width: 8px; background: #cdcdcd; }
.market-scroll b { height: 68px; }
.tabs { display: flex; height: 12px; color: #888; align-items: flex-start; }
.tabs button { height: 10px; line-height: 9px; padding: 0 5px; position: relative; }
.tabs button:not(.active):not(:last-child)::after, .side .tabs button:last-child::after { content: ''; position: absolute; right: 0; top: 2px; height: 6px; border-right: 1px solid #999; }
.tabs .active { background: #fff; color: #222; border: solid #444; border-width: 0 1px 1px; }
.nav { flex: 1; display: flex; flex-direction: column; padding-top: 1px; }
.nav ul { margin: 0; padding: 1px 0 0 3px; list-style: none; background: #fff; flex: 1; border-bottom: 1px solid #555; }
.nav li { display: flex; align-items: center; gap: 2px; height: 9px; }
.nav li .glyph { width: 8px; height: 8px; }
.level1 { padding-left: 1px; }
.level2 { padding-left: 11px; }
.level3 { padding-left: 22px; }
.twig { width: 8px; height: 9px; flex: none; display: flex; align-items: center; background: linear-gradient(#bbb, #bbb) right 4px / 5px 1px no-repeat, linear-gradient(#bbb, #bbb) 3px 0 / 1px 5px no-repeat; }
.twig b { width: 5px; height: 5px; border: 1px solid #aaa; background: #fff; font: 4px/3px "Liberation Sans", sans-serif; text-align: center; margin-left: 1px; }

.charts { flex: 1; min-width: 0; padding-right: 2px; }
.dark { background: #1e1e1e; border: solid #777; border-width: 1px 0 0 1px; display: grid; grid-template-columns: 1fr 21px; grid-template-rows: 206px 2px 71px 10px; overflow: hidden; color: #ddd; font: 5px/7px "Liberation Sans", sans-serif; }
.pane { position: relative; border-right: 1px solid #b5b5b5; grid-column: 1; min-width: 0; }
.price { grid-row: 1; }
.rsi { grid-row: 3; }
.price::after { content: ''; position: absolute; left: 0; right: -21px; top: 100%; height: 2px; background: #a4a4a4; }
.pane svg { width: 100%; height: 100%; }
.grid path { stroke: #606060; stroke-width: 0.7; stroke-dasharray: 1.5 1.5; fill: none; }
.day { stroke: #bbb; stroke-width: 0.8; stroke-dasharray: 2 1.5; }
.cursor-line { stroke: #e8e8e8; stroke-width: 1; }
.red { stroke: #e0301c; stroke-width: 0.8; }
.green { stroke: #1fe01f; stroke-width: 0.9; }
.band { fill: none; stroke: #c2a040; stroke-width: 0.9; }
.order { stroke: #ee1313; stroke-width: 1.4; }
.level { stroke: #b01020; stroke-width: 0.9; }
.high { stroke-dasharray: 2 1; }
.rsi-line { fill: none; stroke: #208080; stroke-width: 0.9; }
.quote { position: absolute; left: 2px; top: 1px; color: #ccc; }
.params { position: absolute; left: 36px; top: 10px; font: 8px/10px "Liberation Sans", sans-serif; color: #f0f0f0; white-space: nowrap; }
.balance { position: absolute; left: 3px; bottom: 1px; color: #12b512; }
.axis { grid-column: 2; padding-left: 2px; display: flex; flex-direction: column; }
.main-axis { padding-top: 9px; grid-row: 1; }
.main-axis span { line-height: 17px; }
.rsi-axis { grid-row: 3; padding-left: 1px; }
.rsi-axis span:nth-child(2) { margin-top: 5px; }
.rsi-axis span:nth-child(3) { margin-top: auto; }
.rsi-axis span:nth-child(4) { margin-top: 7px; }
.times { grid-row: 4; grid-column: 1; border-top: 1px solid #b5b5b5; display: flex; position: relative; line-height: 9px; }
.times span { flex: 0 0 calc(100% / 25.2); white-space: nowrap; }
.stamp { position: absolute; left: 12px; top: 1px; width: 40px; height: 7px; line-height: 7px; background: #fff; color: #111; text-align: center; font-weight: 400; }
.chart-tabs { display: flex; height: 12px; border-top: 1px solid #ccc; color: #888; }
.chart-tabs button { flex: 0 1 48px; min-width: 0; text-align: left; padding-left: 6px; line-height: 10px; height: 10px; position: relative; }
.chart-tabs button.short { flex-basis: 42px; }
.chart-tabs button:nth-last-child(n + 6)::after { content: ''; position: absolute; right: 0; top: 2px; height: 6px; border-right: 1px solid #999; }
.chart-tabs .active { flex: none; background: #fff; color: #111; border: solid #444; border-width: 0 1px 1px; padding: 0 5px; }
.arrows { width: 9px; color: #777; }

.dock { display: flex; border-top: 1px solid #c8c8c8; height: 67px; padding-top: 2px; }
.spine { width: 8px; flex: none; background: linear-gradient(#dbe7f4, #a9c6e6); display: flex; flex-direction: column; justify-content: space-between; align-items: center; margin-bottom: 1px; }
.spine button { background: #f0f0f0; height: 7px; width: 8px; display: grid; place-items: center; }
.spine .glyph { width: 5px; height: 5px; }
.spine span { writing-mode: vertical-rl; transform: rotate(180deg); line-height: 8px; }
.dock-body { flex: 1; min-width: 0; padding-right: 2px; }
.log { display: flex; height: 51px; overflow: hidden; background: #fff; border-bottom: 1px solid #555; border-top: 1px solid #bbb; }
.log table { flex: 1; border-collapse: collapse; height: min-content; table-layout: fixed; }
.log th { text-align: left; font-weight: 400; height: 10px; padding: 0 0 0 3px; }
.log th:first-child { width: 80px; }
.log td { height: 10px; padding: 0 0 0 2px; white-space: nowrap; }
.log td:first-child { display: flex; align-items: center; gap: 3px; border-right: 1px solid #ddd; }
.log td .glyph { width: 6px; height: 6px; }
.log tbody tr:nth-child(odd) { background: #e9e9e9; }
.log-scroll b { height: 8px; width: 7px; }
.dock-tabs { padding: 0; height: 12px; }
sub { color: #e0202a; font: bold 5px/4px "Liberation Sans", sans-serif; vertical-align: -2px; }

.tester { height: 108px; }
.graph { display: grid; grid-template-columns: 1fr 21px; grid-template-rows: 83px 9px; background: #fff; border-top: 1px solid #aaa; border-bottom: 1px solid #888; padding-left: 2px; font: 5px/7px "Liberation Sans", sans-serif; color: #222; }
.plot { position: relative; border: 1px solid #555; min-width: 0; }
.plot svg { width: 100%; height: 100%; }
.pale path { stroke: #ccc; stroke-width: 0.7; stroke-dasharray: 2 1.5; fill: none; }
.balance-line { fill: none; stroke: #20209a; stroke-width: 1.3; }
.spikes { stroke: #1414a8; stroke-width: 1.2; }
.equity { stroke: #279c35; stroke-width: 1; }
.volume { stroke: #279c35; stroke-width: 1; }
.rule { stroke: #555; stroke-width: 1; }
.legend { position: absolute; left: 1px; top: 0; }
.legend b { font-weight: 400; color: #1c1c9c; }
.legend i { color: #1fa52c; }
.volume-name { top: 67px; }
.money { display: flex; flex-direction: column; gap: 9px; padding-left: 1px; margin-top: -1px; }
.steps { display: flex; line-height: 8px; padding-right: 11px; }
.steps b { width: 5px; font-weight: 400; flex: none; }
.steps span { flex: 1 1 0; min-width: 0; display: flex; justify-content: center; }

.status { display: flex; height: 12px; border-top: 1px solid #ccc; line-height: 11px; padding-left: 1px; }
.status span:not(.grow) { border-left: 1px solid #ccc; padding-left: 3px; width: 35px; white-space: nowrap; }
.status span.profile { width: 58px; }
.status span.date { width: 51px; }
.status span.traffic { width: 64px; display: flex; align-items: center; gap: 2px; }
.traffic .glyph { width: 12px; height: 6px; }

.taskbar { display: flex; height: 14px; background: #222f3d; color: #f2f4f6; align-items: stretch; padding-left: 1px; }
.sys { width: 18px; display: grid; place-items: center; flex: none; }
.tasks { flex: 1; display: flex; min-width: 0; padding-left: 2px; }
.tasks button { flex: 1 1 0; min-width: 0; display: flex; align-items: center; gap: 2px; padding-left: 3px; border-bottom: 1px solid #5b93c4; border-right: 3px solid #222f3d; }
.tasks .glyph { width: 8px; height: 8px; }
.tasks .green { background: #3c9b4f; }
.tasks .lit { background: #46525f; border-bottom-color: #8fc3ee; }
.tray { width: 113px; display: flex; align-items: center; gap: 4px; padding-left: 3px; flex: none; }
.tray .glyph { width: 8px; height: 8px; }
.tray .time { margin: 0 5px 0 3px; }
</style>
